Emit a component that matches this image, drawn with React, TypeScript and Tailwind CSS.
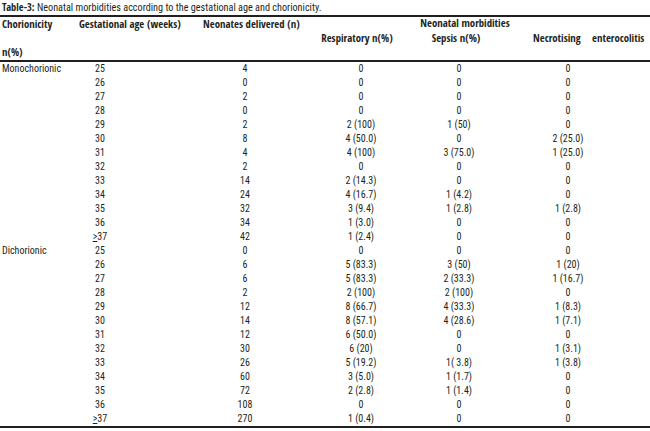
type Row = [string, string, string, string, string];

const mono: Row[] = [
  ["25", "4", "0", "0", "0"],
  ["26", "0", "0", "0", "0"],
  ["27", "2", "0", "0", "0"],
  ["28", "0", "0", "0", "0"],
  ["29", "2", "2 (100)", "1 (50)", "0"],
  ["30", "8", "4 (50.0)", "0", "2 (25.0)"],
  ["31", "4", "4 (100)", "3 (75.0)", "1 (25.0)"],
  ["32", "2", "0", "0", "0"],
  ["33", "14", "2 (14.3)", "0", "0"],
  ["34", "24", "4 (16.7)", "1 (4.2)", "0"],
  ["35", "32", "3 (9.4)", "1 (2.8)", "1 (2.8)"],
  ["36", "34", "1 (3.0)", "0", "0"],
  [">37", "42", "1 (2.4)", "0", "0"],
];

const di: Row[] = [
  ["25", "0", "0", "0", "0"],
  ["26", "6", "5 (83.3)", "3 (50)", "1 (20)"],
  ["27", "6", "5 (83.3)", "2 (33.3)", "1 (16.7)"],
  ["28", "2", "2 (100)", "2 (100)", "0"],
  ["29", "12", "8 (66.7)", "4 (33.3)", "1 (8.3)"],
  ["30", "14", "8 (57.1)", "4 (28.6)", "1 (7.1)"],
  ["31", "12", "6 (50.0)", "0", "0"],
  ["32", "30", "6 (20)", "0", "1 (3.1)"],
  ["33", "26", "5 (19.2)", "1( 3.8)", "1 (3.8)"],
  ["34", "60", "3 (5.0)", "1 (1.7)", "0"],
  ["35", "72", "2 (2.8)", "1 (1.4)", "0"],
  ["36", "108", "0", "0", "0"],
  [">37", "270", "1 (0.4)", "0", "0"],
];

function Age({ v }: { v: string }) {
  if (v.startsWith(">")) {
    return (
      <span>
        <span className="underline underline-offset-1">&gt;</span>
        {v.slice(1)}
      </span>
    );
  }
  return <span>{v}</span>;
}

function DataRow({ label, row }: { label: string; row: Row }) {
  return (
    <div className="flex h-[14px] items-center leading-[14px]">
      <div className="w-[60px] shrink-0 pl-[2px] whitespace-nowrap">{label}</div>
      <div className="w-[80px] shrink-0 text-center">
        <Age v={row[0]} />
      </div>
      <div className="ml-[60px] w-[90px] shrink-0 text-center">{row[1]}</div>
      <div className="ml-[26px] w-[90px] shrink-0 text-center">{row[2]}</div>
      <div className="ml-[8px] w-[90px] shrink-0 text-center">{row[3]}</div>
      <div className="ml-[19px] w-[90px] shrink-0 text-center">{row[4]}</div>
    </div>
  );
}

export default function App() {
  const head = "font-['Open_Sans_Condensed','Roboto_Condensed',sans-serif] font-bold text-[10.75px]";
  return (
    <div className="w-[650px] h-[431px] bg-white text-[#231f20] font-['Roboto_Condensed','Liberation_Sans',sans-serif] text-[10px]">
      <div className="h-[15px] pl-[2px] leading-[14px] whitespace-nowrap">
        <span className="font-['Open_Sans_Condensed','Roboto_Condensed',sans-serif] font-bold text-[10.5px]">Table-3:</span>{" "}
        <span className="text-[10.2px]">Neonatal morbidities according to the gestational age and chorionicity.</span>
      </div>
      <div className="h-[2px] bg-[#231f20]" />
      <div className={`${head} h-[43px]`}>
        <div className="flex h-[14px] items-center leading-[14px] whitespace-nowrap">
          <div className="w-[77px] shrink-0 pl-[2px]">Chorionicity</div>
          <div className="w-[126px] shrink-0 pl-[2px]">Gestational age (weeks)</div>
          <div className="w-[90px] shrink-0 text-center">Neonates delivered (n)</div>
          <div className="ml-[87px] w-[170px] shrink-0 -mt-[3px] text-center">Neonatal morbidities</div>
        </div>
        <div className="flex h-[14px] items-center leading-[14px] whitespace-nowrap">
          <div className="ml-[310px] w-[94px] shrink-0 text-center">Respiratory n(%)</div>
          <div className="ml-[7px] w-[90px] shrink-0 text-center">Sepsis n(%)</div>
          <div className="ml-[32px] w-[59px] shrink-0">Necrotising</div>
          <div className="w-[58px] shrink-0">enterocolitis</div>
        </div>
        <div className="flex h-[14px] items-center leading-[14px] pl-[2px]">n(%)</div>
      </div>
      <div className="h-[2px] bg-[#231f20]" />
      <div>
        {mono.map((r, i) => (
          <DataRow key={"m" + i} label={i === 0 ? "Monochorionic" : ""} row={r} />
        ))}
        {di.map((r, i) => (
          <DataRow key={"d" + i} label={i === 0 ? "Dichorionic" : ""} row={r} />
        ))}
      </div>
      <div className="h-[2px] bg-[#231f20]" />
    </div>
  );
}
